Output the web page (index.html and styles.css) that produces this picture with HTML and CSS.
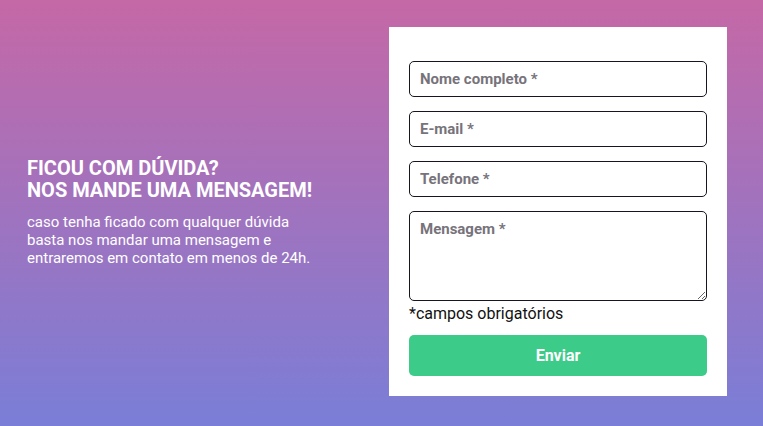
FILE: index.html
```html
<!DOCTYPE html>
<html lang="pt-BR">
<head>
<meta charset="utf-8">
<title>Contato</title>
<link rel="stylesheet" href="styles.css">
</head>
<body>
<main class="page">
  <section class="intro">
    <h1 class="intro-title">FICOU COM DÚVIDA?<br>NOS MANDE UMA MENSAGEM!</h1>
    <p class="intro-text">caso tenha ficado com qualquer dúvida<br>basta nos mandar uma mensagem e<br>entraremos em contato em menos de 24h.</p>
  </section>
  <form class="card">
    <input class="field" type="text" placeholder="Nome completo *">
    <input class="field" type="email" placeholder="E-mail *">
    <input class="field" type="tel" placeholder="Telefone *">
    <textarea class="field field-area" placeholder="Mensagem *"></textarea>
    <p class="note">*campos obrigatórios</p>
    <button class="submit" type="button">Enviar</button>
  </form>
</main>
</body>
</html>
```
FILE: styles.css
```css
* { box-sizing: border-box; }
html, body { margin: 0; height: 100%; }
body {
  font-family: Roboto, "Liberation Sans", Arial, sans-serif;
  background: linear-gradient(180deg, #c568a6 0%, #7a7ed7 100%);
}
.page {
  height: 426px;
  display: flex;
  align-items: center;
  padding: 27px 36px 30px 27px;
}
.intro {
  flex: 1;
  color: #fff;
}
.intro-title {
  margin: 0 0 12px;
  font-size: 20px;
  line-height: 22px;
  font-weight: 700;
}
.intro-text {
  margin: 0;
  font-size: 15px;
  line-height: 18px;
}
.card {
  width: 338px;
  height: 369px;
  background: #fff;
  padding: 34px 20px 20px;
  display: flex;
  flex-direction: column;
}
.field {
  display: block;
  width: 100%;
  height: 36px;
  margin: 0 0 14px;
  border: 1px solid #1a1320;
  border-radius: 5px;
  padding: 0 10px;
  font-family: inherit;
  font-size: 15px;
  font-weight: 700;
  color: #333;
  background: #fff;
}
.field::placeholder { color: #77737b; opacity: 1; }
.field-area {
  height: 90px;
  margin-bottom: 3px;
  padding-top: 8px;
  resize: vertical;
}
.note {
  margin: 0 0 12px;
  font-size: 16px;
  line-height: 19px;
  color: #111;
}
.submit {
  height: 41px;
  width: 100%;
  border: 0;
  border-radius: 5px;
  background: #3ccb88;
  color: #fff;
  font-family: inherit;
  font-size: 16px;
  font-weight: 700;
}
```
